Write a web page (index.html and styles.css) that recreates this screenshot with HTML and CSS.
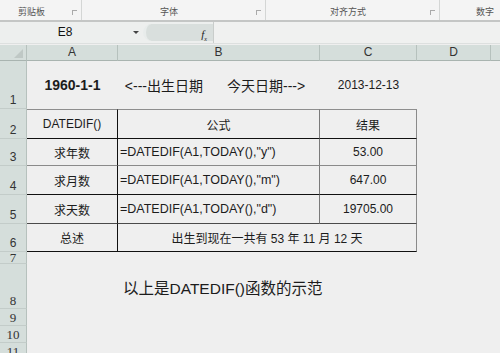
FILE: index.html
```html
<!DOCTYPE html>
<html lang="zh">
	<head>
		<meta charset="UTF-8" />
		<title>DATEDIF</title>
		<link rel="stylesheet" href="styles.css">
	</head>
	<body>
		<!-- Ribbon group labels -->
		<div class="ribbon">
			<div class="group g1"><span class="label">剪贴板</span><span class="launch"></span></div>
			<div class="group g2"><span class="label">字体</span><span class="launch"></span></div>
			<div class="group g3"><span class="label">对齐方式</span><span class="launch"></span></div>
			<div class="group g4"><span class="label">数字</span></div>
		</div>

		<!-- Formula bar -->
		<div class="fbar">
			<div class="namebox">E8</div>
			<div class="ddarrow"></div>
			<div class="fxpill"><span class="fx">f<sub>x</sub></span></div>
			<div class="finput"></div>
		</div>

		<div class="sheet">
			<div class="colhead corner"><span class="tri"></span></div>
			<div class="colhead">A</div>
			<div class="colhead">B</div>
			<div class="colhead">C</div>
			<div class="colhead">D</div>
			<div class="colhead last"></div>

			<div class="rowhead">1</div>
			<div class="cell bold">1960-1-1</div>
			<div class="cell big"><span>&lt;---出生日期</span><span>今天日期---&gt;</span></div>
			<div class="cell">2013-12-13</div>
			<div></div><div></div>

			<div class="rowhead">2</div>
			<div class="cell t top colA dk">DATEDIF()</div>
			<div class="cell t top colB dk">公式</div>
			<div class="cell t top colC dk">结果</div>
			<div></div><div></div>

			<div class="rowhead">3</div>
			<div class="cell t colA">求年数</div>
			<div class="cell t colB formula">=DATEDIF(A1,TODAY(),"y")</div>
			<div class="cell t colC">53.00</div>
			<div></div><div></div>

			<div class="rowhead">4</div>
			<div class="cell t colA dk">求月数</div>
			<div class="cell t colB formula dk">=DATEDIF(A1,TODAY(),"m")</div>
			<div class="cell t colC dk">647.00</div>
			<div></div><div></div>

			<div class="rowhead">5</div>
			<div class="cell t colA mid">求天数</div>
			<div class="cell t colB formula mid">=DATEDIF(A1,TODAY(),"d")</div>
			<div class="cell t colC mid">19705.00</div>
			<div></div><div></div>

			<div class="rowhead">6</div>
			<div class="cell t colA dk">总述</div>
			<div class="cell t colC merged dk">出生到现在一共有 53 年 11 月 12 天</div>
			<div></div><div></div>

			<div class="rowhead serif short">7</div>
			<div></div><div></div><div></div><div></div><div></div>

			<div class="rowhead serif">8</div>
			<div></div>
			<div class="cell note">以上是DATEDIF()函数的示范</div>
			<div></div><div></div><div></div>

			<div class="rowhead serif">9</div>
			<div></div><div></div><div></div><div></div><div></div>

			<div class="rowhead serif">10</div>
			<div></div><div></div><div></div><div></div><div></div>

			<div class="rowhead serif">11</div>
			<div></div><div></div><div></div><div></div><div></div>
		</div>
	</body>
</html>
```

FILE: styles.css
```css
body {
	margin: 0;
	background: #efefef;
	font-family: "Liberation Sans", "Noto Sans CJK SC", sans-serif;
	color: #1c1c1c;
	width: 500px;
	height: 353px;
	overflow: hidden;
}

/* Ribbon */
.ribbon {
	display: flex;
	height: 20px;
	background: #f4f4f4;
	border-bottom: 2px solid #c4c6c5;
}
.group {
	position: relative;
	display: flex;
	align-items: flex-end;
	justify-content: flex-start;
	border-right: 1px solid #d4d6d5;
	box-sizing: border-box;
	padding-bottom: 2px;
	flex-shrink: 0;
}
.g1 {
	width: 82px;
	padding-left: 18px;
}
.g2 {
	width: 184px;
	padding-left: 78px;
}
.g3 {
	width: 174px;
	padding-left: 64px;
}
.g4 {
	flex: 1;
	border-right: none;
	padding-left: 36px;
}
.label {
	font-size: 9px;
	color: #555;
	line-height: 11px;
}
.launch {
	position: absolute;
	right: 4px;
	bottom: 5px;
	width: 4px;
	height: 4px;
	border-left: 1px solid #aaa;
	border-top: 1px solid #aaa;
}

/* Formula bar */
.fbar {
	display: flex;
	height: 21px;
	background: #edefee;
	border-bottom: 1px solid #dde0df;
	margin-bottom: 1px;
}
.namebox {
	width: 130px;
	text-align: center;
	font-size: 12px;
	line-height: 21px;
	color: #111;
}
.ddarrow {
	width: 13px;
	position: relative;
}
.ddarrow::after {
	content: "";
	position: absolute;
	left: 3px;
	top: 9px;
	border-left: 3px solid transparent;
	border-right: 3px solid transparent;
	border-top: 3px solid #444;
}
.fxpill {
	width: 70px;
	margin: 2px 0;
	background: #d9dfdd;
	border-radius: 9px 0 0 9px;
	border-left: 3px solid #e8eceb;
	box-sizing: border-box;
	text-align: right;
	padding-right: 6px;
}
.fx {
	font-family: "Liberation Serif", serif;
	font-style: italic;
	font-size: 11px;
	line-height: 17px;
	color: #222;
}
.fx sub {
	font-size: 6px;
}
.finput {
	flex: 1;
	background: #f0f1f0;
	border-left: 1px solid #c9cdcb;
}

/* Sheet */
.sheet {
	display: grid;
	grid-template-columns: 27px 91px 202px 97px 74px 1fr;
	grid-template-rows: 16px 48px 30px 27px 29px 29px 28px 12px 45px 17px 17px 17px;
}
.colhead {
	background: #d5dedb;
	border-right: 1px solid #b6c1bd;
	border-bottom: 1px solid #a9b4b0;
	box-sizing: border-box;
	text-align: center;
	font-size: 12px;
	line-height: 15px;
	color: #333;
}
.colhead.last {
	border-right: none;
}
.corner {
	position: relative;
}
.tri {
	position: absolute;
	right: 3px;
	bottom: 2px;
	border-left: 9px solid transparent;
	border-bottom: 9px solid #bfc8c5;
}
.rowhead {
	background: #d5dedb;
	border-right: 1px solid #b6c1bd;
	border-bottom: 1px solid #c3ccc9;
	box-sizing: border-box;
	display: flex;
	align-items: flex-end;
	justify-content: center;
	font-size: 12px;
	line-height: 13px;
	color: #333;
	padding-bottom: 1px;
	overflow: hidden;
}
.rowhead.serif {
	font-family: "Liberation Serif", serif;
	font-size: 13px;
}
.rowhead.short {
	line-height: 11px;
	padding-bottom: 0;
}
.cell {
	display: flex;
	align-items: center;
	justify-content: center;
	font-size: 12px;
	box-sizing: border-box;
	white-space: nowrap;
}
.bold {
	font-weight: bold;
	font-size: 14px;
}
.big {
	font-size: 14px;
	gap: 24px;
	padding-right: 8px;
}

/* Table borders */
.t {
	border-bottom: 1px solid #8a8a8a;
}
.t.top {
	border-top: 1px solid #8e8e8e;
}
.t.dk {
	border-bottom-color: #111;
}
.t.mid {
	border-bottom-color: #4a4a4a;
}
.colA {
	border-right: 1px solid #111;
}
.colB {
	border-right: 1px solid #7a7a7a;
}
.colC {
	border-right: 1px solid #8a8a8a;
}
.formula {
	justify-content: flex-start;
	padding-left: 2px;
	font-size: 12.5px;
}
.merged {
	grid-column: span 2;
}
.note {
	justify-content: flex-start;
	padding-left: 5px;
	font-size: 15.5px;
}
```
